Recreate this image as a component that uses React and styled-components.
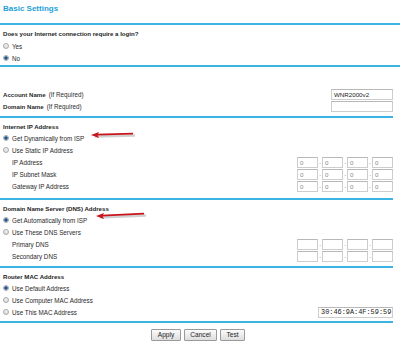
import styled, { createGlobalStyle } from "styled-components";

const GlobalStyle = createGlobalStyle`
  html, body {
    margin: 0;
    padding: 0;
    background: #ffffff;
  }
  body {
    font-family: "Liberation Sans", Arial, sans-serif;
    color: #222;
  }
`;

const Page = styled.div`
  position: relative;
  width: 400px;
  box-sizing: border-box;
  padding: 3px 7px 0 3px;
`;

const Title = styled.h1`
  margin: 0;
  height: 12px;
  line-height: 12px;
  font-size: 8px;
  font-weight: bold;
  color: #1f9fd9;
`;

// ligne bleue entre les sections
const Divider = styled.div`
  height: 2px;
  background: #3ab4e3;
  margin: ${(p) => p.$mt || 0}px ${(p) => (p.$full ? -7 : 0)}px 0 -3px;
`;

const Heading = styled.div`
  height: 10px;
  line-height: 10px;
  margin-top: ${(p) => (p.$mt === undefined ? 4 : p.$mt)}px;
  font-size: 6.1px;
  font-weight: bold;
  color: #1c1c1c;
  white-space: nowrap;
`;

const Row = styled.div`
  position: relative;
  height: 12px;
  display: flex;
  align-items: center;
  justify-content: space-between;
  font-size: 6.3px;
  color: #2a2a2a;
  white-space: nowrap;
`;

const RadioLabel = styled.label`
  display: flex;
  align-items: center;
  gap: 3px;
`;

const Radio = styled.span`
  width: 6px;
  height: 6px;
  box-sizing: border-box;
  border-radius: 50%;
  border: 1px solid #a9a9a9;
  background: ${(p) =>
    p.$checked
      ? "radial-gradient(circle, #24508a 0 1.4px, #8fb4d9 1.8px, #e8eef5 2.4px)"
      : "linear-gradient(#f2f2f2, #dcdcdc)"};
`;

const FieldLabel = styled.span`
  padding-left: ${(p) => (p.$indent ? 9 : 0)}px;
`;

const Strong = styled.b`
  font-size: 6.1px;
  margin-right: 3px;
`;

const TextBox = styled.div`
  width: ${(p) => p.$w}px;
  height: 11px;
  box-sizing: border-box;
  border: 1px solid #cdcdcd;
  border-top-color: #b8b8b8;
  padding: 0 2px;
  line-height: 9px;
  font-size: ${(p) => (p.$mono ? 6.9 : 6.2)}px;
  font-family: ${(p) =>
    p.$mono ? '"Liberation Mono", "Courier New", monospace' : "inherit"};
  color: ${(p) => (p.$dim ? "#8a8a8a" : "#222")};
  background: #fff;
  overflow: hidden;
`;

const IpGroup = styled.div`
  display: flex;
  align-items: center;
`;

const Dot = styled.span`
  width: 4px;
  text-align: center;
  font-size: 6px;
  line-height: 6px;
  color: #333;
`;

const Spacer = styled.div`
  height: ${(p) => p.$h}px;
`;

const Buttons = styled.div`
  display: flex;
  justify-content: center;
  gap: 3px;
  margin-top: 6px;
`;

const Button = styled.button`
  width: ${(p) => p.$w}px;
  height: 12px;
  padding: 0;
  box-sizing: border-box;
  border: 1px solid #9a9a9a;
  border-radius: 1px;
  background: linear-gradient(#fbfbfb, #dedede);
  font-family: "Liberation Sans", Arial, sans-serif;
  font-size: 6.6px;
  line-height: 10px;
  color: #1e1e1e;
`;

const ArrowSvg = styled.svg`
  position: absolute;
  top: ${(p) => p.$top}px;
  left: ${(p) => p.$left}px;
  overflow: visible;
`;

function Arrow({ left, top, width, tilt }) {
  return (
    <ArrowSvg $left={left} $top={top} width={width} height="8" viewBox={`0 0 ${width} 8`}>
      <path
        d={`M4 5.5 L${width + 2} ${5.5 - tilt}`}
        stroke="#9a9a9a"
        strokeOpacity="0.45"
        strokeWidth="2.5"
      />
      <path d={`M6 3.6 L${width} ${3.6 - tilt}`} stroke="#c8141b" strokeWidth="1.6" />
      <path d="M0 4 L8 1 L6.5 4 L8 7 Z" fill="#c8141b" />
    </ArrowSvg>
  );
}

function RadioRow({ checked, children, right }) {
  return (
    <Row>
      <RadioLabel>
        <Radio $checked={checked} />
        {children}
      </RadioLabel>
      {right}
    </Row>
  );
}

function IpField({ empty }) {
  const v = empty ? "" : "0";
  return (
    <IpGroup>
      <TextBox $w={21} $dim>{v}</TextBox>
      <Dot>.</Dot>
      <TextBox $w={21} $dim>{v}</TextBox>
      <Dot>.</Dot>
      <TextBox $w={21} $dim>{v}</TextBox>
      <Dot>.</Dot>
      <TextBox $w={21} $dim>{v}</TextBox>
    </IpGroup>
  );
}

function IpRow({ label, empty }) {
  return (
    <Row>
      <FieldLabel $indent>{label}</FieldLabel>
      <IpField empty={empty} />
    </Row>
  );
}

export default function App() {
  return (
    <>
      <GlobalStyle />
      <Page>
        <Title>Basic Settings</Title>
        <Divider $full $mt={8} />

        <Heading>Does your Internet connection require a login?</Heading>
        <Spacer $h={1} />
        <RadioRow>Yes</RadioRow>
        <RadioRow checked>No</RadioRow>
        <Divider $full $mt={1} />

        <Spacer $h={21} />
        <Row>
          <FieldLabel>
            <Strong>Account Name</Strong>(If Required)
          </FieldLabel>
          <TextBox $w={62}>WNR2000v2</TextBox>
        </Row>
        <Row>
          <FieldLabel>
            <Strong>Domain Name</Strong>(If Required)
          </FieldLabel>
          <TextBox $w={62} />
        </Row>
        <Divider $mt={4} />

        <Heading>Internet IP Address</Heading>
        <RadioRow checked>
          Get Dynamically from ISP
          <Arrow left={88} top={-1} width={42} tilt={1} />
        </RadioRow>
        <RadioRow>Use Static IP Address</RadioRow>
        <IpRow label="IP Address" />
        <IpRow label="IP Subnet Mask" />
        <IpRow label="Gateway IP Address" />
        <Divider $mt={6} />

        <Heading>Domain Name Server (DNS) Address</Heading>
        <RadioRow checked>
          Get Automatically from ISP
          <Arrow left={93} top={-2} width={48} tilt={2} />
        </RadioRow>
        <RadioRow>Use These DNS Servers</RadioRow>
        <IpRow label="Primary DNS" empty />
        <IpRow label="Secondary DNS" empty />
        <Divider $mt={4} />

        <Heading>Router MAC Address</Heading>
        <RadioRow checked>Use Default Address</RadioRow>
        <RadioRow>Use Computer MAC Address</RadioRow>
        <RadioRow right={<TextBox $w={75} $mono>30:46:9A:4F:59:59</TextBox>}>
          Use This MAC Address
        </RadioRow>
        <Divider $mt={3} />

        <Buttons>
          <Button $w={30}>Apply</Button>
          <Button $w={33}>Cancel</Button>
          <Button $w={25}>Test</Button>
        </Buttons>
      </Page>
    </>
  );
}
